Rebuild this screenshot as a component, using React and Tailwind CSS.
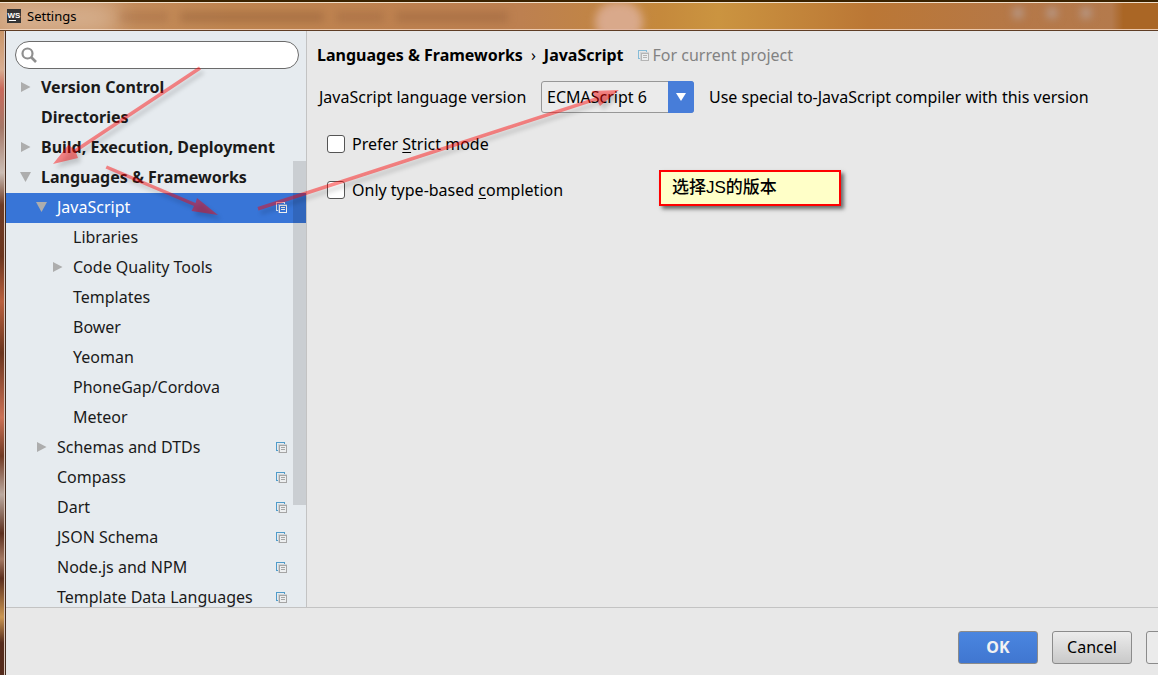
import React from "react";

const treeItems = [
  { label: "Version Control", level: 0, arrow: "closed", bold: true },
  { label: "Directories", level: 0, bold: true },
  { label: "Build, Execution, Deployment", level: 0, arrow: "closed", bold: true },
  { label: "Languages & Frameworks", level: 0, arrow: "open", bold: true },
  { label: "JavaScript", level: 1, arrow: "open", project: true, selected: true },
  { label: "Libraries", level: 2 },
  { label: "Code Quality Tools", level: 2, arrow: "closed" },
  { label: "Templates", level: 2 },
  { label: "Bower", level: 2 },
  { label: "Yeoman", level: 2 },
  { label: "PhoneGap/Cordova", level: 2 },
  { label: "Meteor", level: 2 },
  { label: "Schemas and DTDs", level: 1, arrow: "closed", project: true },
  { label: "Compass", level: 1, project: true },
  { label: "Dart", level: 1, project: true },
  { label: "JSON Schema", level: 1, project: true },
  { label: "Node.js and NPM", level: 1, project: true },
  { label: "Template Data Languages", level: 1, project: true },
];

const indents = ["pl-3", "pl-7", "pl-11"];

function ProjectIcon({ selected, faded }) {
  const back = selected ? "#dfe8f7" : faded ? "#86bcd8" : "#4f9bc9";
  const front = selected ? "#f0f0f0" : faded ? "#b5b5b5" : "#a5a5a5";
  const halo = selected ? "#6f9ae0" : "#cfd3d6";
  const fill = selected ? "#3875d7" : "#eceeef";
  return (
    <svg className="size-[11px] shrink-0" viewBox="0 0 11 11" fill="none" shapeRendering="crispEdges" aria-hidden="true">
      <path d="M3 8.500H.5V.5h8V3" stroke={back} />
      <path d="M2.500 11V2.500H11" stroke={halo} />
      <rect x="3.500" y="3.500" width="7" height="7" fill={fill} stroke={front} />
      <path d="M5 5.500h4M5 7.500h4" stroke={front} />
    </svg>
  );
}

function Twisty({ state }) {
  return (
    <svg className="h-3 w-3 shrink-0" viewBox="0 0 12 12" fill="#adadad" aria-hidden="true">
      {state === "closed" && <path d="M1 1l9.500 5L1 11z" />}
      {state === "open" && <path d="M0 1h11L5.500 11z" />}
    </svg>
  );
}

function TreeRow({ item }) {
  return (
    <li className={item.selected ? "bg-[#3875d7] text-white" : "text-[#1a1a1a]"}>
      <button
        type="button"
        className={`flex h-[30px] w-full items-center pr-[19px] pb-0.5 text-left ${indents[item.level]} ${item.bold ? "font-bold" : ""}`}
      >
        <span className="flex w-[23px] shrink-0 pl-0.5">
          <Twisty state={item.arrow} />
        </span>
        <span className="flex-1 whitespace-nowrap">{item.label}</span>
        {item.project && <ProjectIcon selected={item.selected} />}
      </button>
    </li>
  );
}

function TitleBar() {
  return (
    <header className="relative flex h-[31px] shrink-0 items-center overflow-hidden border-t-2 border-b border-t-[#3a2200] border-b-[#5f3d25] bg-[linear-gradient(90deg,#c89468_0,#c08550_20%,#bd8050_45%,#c5893c_57%,#cb9440_62%,#bb7735_75%,#b57848_88%,#b47a4c_96%,#aa6625_97%)] pl-[7px] shadow-[inset_0_1px_#f1dfc8,inset_0_-1px_#ecc9ad]">
      <div className="absolute -left-2 top-0 h-8 w-32 rounded-full bg-white/30 blur-md" />
      <div className="absolute left-[595px] top-0 h-10 w-12 rounded-full bg-[#dfb19d]/80 blur-xs" />
      <div className="absolute left-[120px] top-2.5 flex h-2.5 gap-3 blur-xs">
        <span className="w-12 bg-[#8f5b38]/30" />
        <span className="w-36 bg-[#8f5b38]/45" />
        <span className="w-12 bg-[#8f5b38]/35" />
        <span className="w-28 bg-[#8f5b38]/40" />
      </div>
      <div className="absolute right-[67px] top-1.5 flex gap-6 blur-xs">
        <span className="size-2.5 bg-[#b79a8c]" />
        <span className="size-2.5 bg-[#b79a8c]" />
        <span className="size-2.5 bg-[#b79a8c]" />
      </div>
      <svg className="relative size-3.5 shrink-0" viewBox="0 0 14 14" aria-hidden="true">
        <rect width="14" height="14" fill="#343434" />
        <text x="7" y="8.500" fontSize="8" fontWeight="700" fontFamily="Liberation Sans, sans-serif" textAnchor="middle" fill="#fff">WS</text>
        <path d="M2 11.500h7" stroke="#fff" />
      </svg>
      <h1 className="relative ml-1.5 text-[13px] leading-5 text-black">Settings</h1>
    </header>
  );
}

function Sidebar() {
  return (
    <aside className="flex w-[301px] shrink-0 flex-col border-r border-[#c3c3c3] bg-[#e6ebef]">
      <div className="pt-2.5 pr-[7px] pb-1 pl-[9px]">
        <label className="flex h-7 items-center gap-2 rounded-full border border-[#6b6b6b] bg-white pl-[5px] pr-3">
          <svg className="size-4 shrink-0" viewBox="0 0 16 16" fill="none" stroke="#8f8f8f" aria-hidden="true">
            <circle cx="6.500" cy="6.500" r="5" strokeWidth="2.200" />
            <path d="M10 10l5 5" strokeWidth="2.600" />
          </svg>
          <input type="search" aria-label="Search settings" className="min-w-0 flex-1 bg-transparent outline-none" />
        </label>
      </div>
      <nav className="relative min-h-0 flex-1 overflow-hidden" aria-label="Settings sections">
        <ul>
          {treeItems.map((item) => (
            <TreeRow key={item.label} item={item} />
          ))}
        </ul>
        <div className="absolute right-0 top-[88px] h-[344px] w-[13px] bg-black/12" />
      </nav>
    </aside>
  );
}

function CheckOption({ id, children }) {
  return (
    <div className="flex items-center gap-[7px]">
      <input id={id} type="checkbox" className="size-[18px] appearance-none rounded-[3px] border border-[#555] bg-white checked:bg-[#3875d7]" />
      <label htmlFor={id} className="leading-6">{children}</label>
    </div>
  );
}

function Content() {
  return (
    <main className="min-w-0 flex-1 px-2.5 pt-3">
      <h2 className="flex items-center whitespace-nowrap leading-6">
        <span className="font-bold">Languages &amp; Frameworks</span>
        <span className="mx-2">›</span>
        <span className="font-bold">JavaScript</span>
        <span className="ml-3.5 flex items-center gap-1 text-[#828282]">
          <ProjectIcon faded />
          For current project
        </span>
      </h2>
      <div className="mt-3.5 flex items-center whitespace-nowrap pl-0.5">
        <label htmlFor="version" className="w-[222px] shrink-0">JavaScript language version</label>
        <div className="relative w-[153px] shrink-0">
          <select id="version" className="h-8 w-full appearance-none rounded-[3px] border border-[#979797] bg-[#ebebeb] pl-[5px] outline-none">
            <option>ECMAScript 6</option>
          </select>
          <span className="pointer-events-none absolute inset-y-0 right-0 flex w-[26px] items-center justify-center rounded-r-[3px] bg-[#477dd9]">
            <svg className="size-2.5" viewBox="0 0 10 10" fill="#fff" aria-hidden="true">
              <path d="M0 1h10L5 9z" />
            </svg>
          </span>
        </div>
        <p className="ml-[15px]">Use special to-JavaScript compiler with this version</p>
      </div>
      <div className="mt-[19px] flex flex-col gap-[22px] pl-2.5">
        <CheckOption id="strict">
          Prefer <u className="underline-offset-2">S</u>trict mode
        </CheckOption>
        <CheckOption id="completion">
          Only type-based <u className="underline-offset-2">c</u>ompletion
        </CheckOption>
      </div>
    </main>
  );
}

function Footer() {
  const base = "h-[33px] w-20 shrink-0 rounded-[3px] border border-[#8b8b8b] pb-0.5";
  return (
    <footer className="flex h-[68px] shrink-0 justify-end gap-3.5 overflow-hidden border-t border-[#c3c3c3] pt-[23px]">
      <button type="button" className={`${base} bg-linear-to-b from-[#4a86e0] to-[#4076d0] font-bold text-[#f2f2f2]`}>OK</button>
      <button type="button" className={`${base} bg-linear-to-b from-[#ececec] to-[#c9c9c9] text-black`}>Cancel</button>
      <button type="button" aria-label="Apply" className="-mr-1 h-[33px] w-4 shrink-0 rounded-l-[3px] border border-[#8b8b8b] bg-[#ebebeb]" />
    </footer>
  );
}

function Annotations() {
  return (
    <>
      <svg className="pointer-events-none absolute left-0 top-0 h-[240px] w-[700px] drop-shadow-[3px_4px_2px_rgba(0,0,0,0.35)]" viewBox="0 0 700 240" aria-hidden="true">
        <g fill="#ff0000" fillOpacity="0.45">
          <path d="M199 66.500L201 69.500 76 152.500 78 158 53 164 68.500 144.500 74 149.500z" />
          <path d="M107 165.500L105.500 168.500 194 206 191.500 211 218 215 197 198 195.500 203z" />
          <path d="M257.500 207L258.500 210.500 597 100.500 600 106 619 90 592 91 595 97.500z" />
        </g>
      </svg>
      <div className="absolute left-[659px] top-[170px] h-9 w-[182px] border-2 border-[#ff0000] bg-[#ffffc8] pl-[11px] text-[17px] font-medium leading-8 text-black shadow-[3px_3px_4px_rgba(0,0,0,0.55)] [font-family:'Liberation_Sans','Noto_Sans_CJK_SC',sans-serif]">
        选择JS的版本
      </div>
    </>
  );
}

export default function App() {
  return (
    <div className="relative flex h-screen flex-col overflow-hidden bg-[#e8e8e8] text-base leading-6 text-black [font-family:'Noto_Sans','Noto_Sans_CJK_SC',sans-serif]">
      <TitleBar />
      <div className="flex min-h-0 flex-1">
        <div className="w-1.5 shrink-0 border-r border-[#43291c] bg-[linear-gradient(180deg,#c99669_0,#d8ad91_6%,#c9695b_9%,#a57868_15%,#cbbdb4_22%,#6e3b25_27%,#6b351e_35%,#b9603e_42%,#6b351e_50%,#cb7155_60%,#713a24_66%,#bcaaa0_72%,#5c2f1e_78%,#a37862_82%,#5c2f1e_85%,#cb9652_91%,#552b1c_95%,#552b1c_100%)] shadow-[inset_-1px_0_#d8c5ba]" />
        <div className="flex min-w-0 flex-1 flex-col">
          <div className="flex min-h-0 flex-1">
            <Sidebar />
            <Content />
          </div>
          <Footer />
        </div>
      </div>
      <Annotations />
    </div>
  );
}
